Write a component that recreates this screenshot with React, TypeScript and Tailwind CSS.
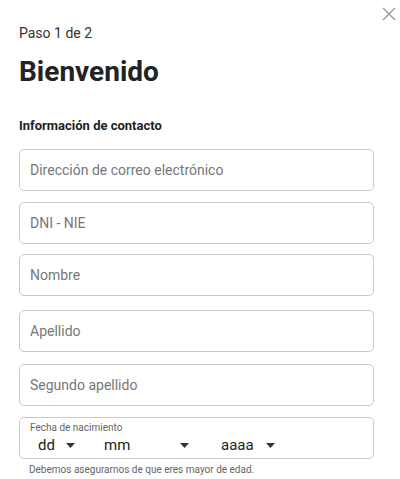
import React from 'react';

const Caret = () => (
    <svg width="9" height="5" viewBox="0 0 9 5" className="shrink-0">
        <path d="M0 0h9L4.5 5z" fill="#333" />
    </svg>
);

const App = () => {
    const fields = [
        { label: 'Dirección de correo electrónico', mt: 'mt-[15px]' },
        { label: 'DNI - NIE', mt: 'mt-[11px]' },
        { label: 'Nombre', mt: 'mt-[10px]' },
        { label: 'Apellido', mt: 'mt-[14px]' },
        { label: 'Segundo apellido', mt: 'mt-[12px]' },
    ];

    return (
        <div className="relative w-[400px] h-[479px] bg-white overflow-hidden font-['Roboto',sans-serif] text-[#222]">
            {/* Close */}
            <button className="absolute top-[7px] left-[382px] w-[14px] h-[14px]" aria-label="Cerrar">
                <svg width="14" height="14" viewBox="0 0 14 14">
                    <path d="M1 1l12 12M13 1L1 13" stroke="#9a9a9a" strokeWidth="1.4" />
                </svg>
            </button>

            <div className="px-[19px] pt-[25px]">
                <p className="text-[14px] leading-[16px] text-[#333]">Paso 1 de 2</p>
                <h1 className="mt-[15px] text-[28px] leading-[32px] font-bold text-[#222]">Bienvenido</h1>
                <h2 className="mt-[30px] text-[13px] leading-[16px] font-bold text-[#222]">Información de contacto</h2>

                {/* Fields */}
                {fields.map((field, index) => (
                    <div
                        key={index}
                        className={`${field.mt} h-[42px] w-[355px] flex items-center px-[10px] border border-[#c9c9c9] rounded-[5px]`}
                    >
                        <span className="text-[14px] text-[#777]">{field.label}</span>
                    </div>
                ))}

                {/* Date */}
                <div className="mt-[11px] h-[42px] w-[355px] border border-[#c9c9c9] rounded-[5px] px-[10px] pt-[4px]">
                    <p className="text-[10px] leading-[12px] text-[#666]">Fecha de nacimiento</p>
                    <div className="mt-[2px] flex items-center text-[15px] leading-[18px] text-[#222]">
                        <div className="w-[74px] flex items-center gap-[11px] pl-[8px]">
                            <span>dd</span>
                            <Caret />
                        </div>
                        <div className="w-[117px] flex items-center">
                            <span className="w-[76px]">mm</span>
                            <Caret />
                        </div>
                        <div className="flex items-center gap-[12px]">
                            <span>aaaa</span>
                            <Caret />
                        </div>
                    </div>
                </div>
                <p className="mt-[5px] pl-[10px] text-[10px] leading-[12px] text-[#666]">
                    Debemos asegurarnos de que eres mayor de edad.
                </p>
            </div>
        </div>
    );
};

export default App;
